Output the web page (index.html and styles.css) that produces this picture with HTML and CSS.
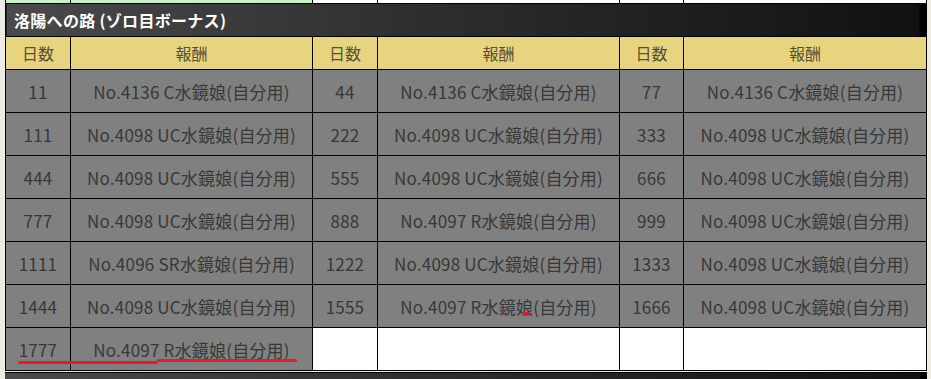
FILE: index.html
```html
<!DOCTYPE html>
<html lang="ja">
<head>
<meta charset="utf-8">
<link rel="stylesheet" href="styles.css">
</head>
<body>
<div class="page">
  <table class="prev">
    <colgroup>
      <col class="c-day"><col class="c-rew"><col class="c-day2"><col class="c-rew"><col class="c-day3"><col class="c-rew3">
    </colgroup>
    <tr><td class="green"></td><td class="green"></td><td></td><td></td><td></td><td></td></tr>
  </table>
  <table class="bonus">
    <colgroup>
      <col class="c-day"><col class="c-rew"><col class="c-day2"><col class="c-rew"><col class="c-day3"><col class="c-rew3">
    </colgroup>
    <tr><th class="title" colspan="6">洛陽への路 (ゾロ目ボーナス)</th></tr>
    <tr class="head">
      <th class="day">日数</th><th>報酬</th>
      <th class="day">日数</th><th>報酬</th>
      <th class="day">日数</th><th>報酬</th>
    </tr>
    <tr>
      <td class="day">11</td><td>No.4136 C水鏡娘(自分用)</td>
      <td class="day">44</td><td>No.4136 C水鏡娘(自分用)</td>
      <td class="day">77</td><td>No.4136 C水鏡娘(自分用)</td>
    </tr>
    <tr>
      <td class="day">111</td><td>No.4098 UC水鏡娘(自分用)</td>
      <td class="day">222</td><td>No.4098 UC水鏡娘(自分用)</td>
      <td class="day">333</td><td>No.4098 UC水鏡娘(自分用)</td>
    </tr>
    <tr>
      <td class="day">444</td><td>No.4098 UC水鏡娘(自分用)</td>
      <td class="day">555</td><td>No.4098 UC水鏡娘(自分用)</td>
      <td class="day">666</td><td>No.4098 UC水鏡娘(自分用)</td>
    </tr>
    <tr>
      <td class="day">777</td><td>No.4098 UC水鏡娘(自分用)</td>
      <td class="day">888</td><td>No.4097 R水鏡娘(自分用)</td>
      <td class="day">999</td><td>No.4098 UC水鏡娘(自分用)</td>
    </tr>
    <tr>
      <td class="day">1111</td><td>No.4096 SR水鏡娘(自分用)</td>
      <td class="day">1222</td><td>No.4098 UC水鏡娘(自分用)</td>
      <td class="day">1333</td><td>No.4098 UC水鏡娘(自分用)</td>
    </tr>
    <tr>
      <td class="day">1444</td><td>No.4098 UC水鏡娘(自分用)</td>
      <td class="day">1555</td><td>No.4097 R水鏡娘(自分用)</td>
      <td class="day">1666</td><td>No.4098 UC水鏡娘(自分用)</td>
    </tr>
    <tr>
      <td class="day">1777</td><td>No.4097 R水鏡娘(自分用)</td>
      <td class="day empty"></td><td class="empty"></td>
      <td class="day empty"></td><td class="empty"></td>
    </tr>
  </table>
  <div class="nextbar"></div>
  <span class="mark line1"></span>
  <span class="mark line2"></span>
  <span class="mark dot"></span>
</div>
</body>
</html>
```
FILE: styles.css
```css
html, body {
  margin: 0;
  padding: 0;
}
body {
  background: #eeeae4;
  font-family: "Noto Sans CJK JP", "Noto Sans", sans-serif;
  height: 379px;
  overflow: hidden;
}
.page {
  position: relative;
  padding-left: 5px;
  margin-top: -1px;
}
table {
  border-collapse: collapse;
  table-layout: fixed;
  width: 922px;
}
.c-day { width: 65px; }
.c-rew { width: 242px; }
.c-day2 { width: 65px; }
.c-day3 { width: 64px; }
.c-rew3 { width: 243px; }

.prev td {
  height: 3px;
  padding: 0;
  border: 1px solid #000;
  border-bottom: none;
  background: #fff;
}
.prev td.green { background: #c9f1c9; }

.bonus td, .bonus th {
  border: 1px solid #000;
  padding: 0;
  text-align: center;
}
.bonus .day { border-right: 1px dashed #000; }
.bonus .title {
  height: 32px;
  text-align: left;
  padding-left: 8px;
  color: #fff;
  font-weight: bold;
  font-size: 16px;
  letter-spacing: 0.3px;
  background: linear-gradient(to right, #4a4a4a 0%, #2e2e2e 45%, #111 99.2%, #000 99.2%);
}
.bonus .head th {
  height: 32px;
  background: #e6d47e;
  color: #5a4f36;
  font-weight: normal;
  font-size: 16px;
}
.bonus td {
  height: 42px;
  background: #808080;
  color: #383838;
  font-size: 17px;
  letter-spacing: 0.2px;
}
.bonus td.empty { background: #fff; }

.nextbar {
  margin-top: 1px;
  width: 922px;
  height: 10px;
  border-top: 1px solid #000;
  background: linear-gradient(to right, #4a4a4a 0%, #2e2e2e 45%, #111 99.2%, #000 99.2%);
}

.mark {
  position: absolute;
  background: #e8192c;
  border-radius: 2px;
}
.line1 { left: 18px; top: 362px; width: 140px; height: 3px; }
.line2 { left: 157px; top: 360px; width: 140px; height: 3px; }
.dot { left: 523px; top: 313px; width: 7px; height: 4px; border-radius: 3px; }
```
